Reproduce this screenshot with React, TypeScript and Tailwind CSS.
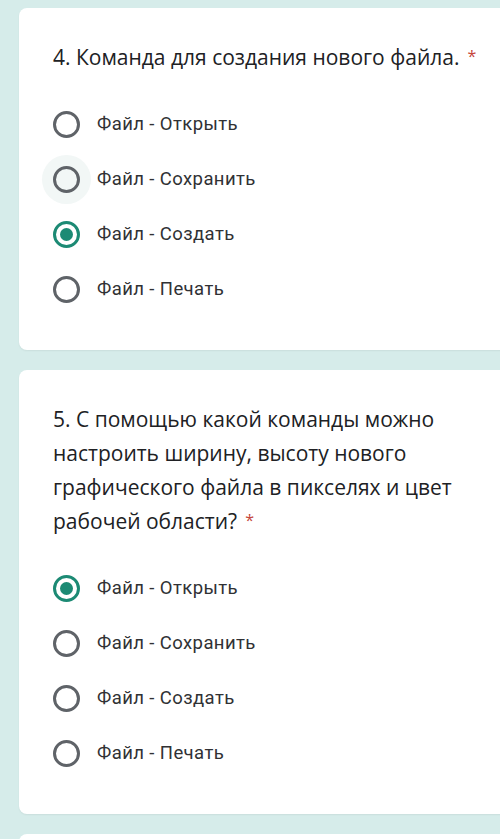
const questions = [
  {
    title: "4. Команда для создания нового файла.",
    options: ["Файл - Открыть", "Файл - Сохранить", "Файл - Создать", "Файл - Печать"],
    checked: 2,
    hover: 1,
  },
  {
    title:
      "5. С помощью какой команды можно настроить ширину, высоту нового графического файла в пикселях и цвет рабочей области?",
    options: ["Файл - Открыть", "Файл - Сохранить", "Файл - Создать", "Файл - Печать"],
    checked: 0,
    hover: -1,
  },
];

function Radio({ checked, hover }: { checked: boolean; hover: boolean }) {
  return (
    <div className="relative flex h-[27px] w-[27px] shrink-0 items-center justify-center">
      {hover && <div className="absolute -inset-[11px] rounded-full bg-[#f2f7f6]" />}
      <div
        className={
          checked
            ? "relative flex h-[27px] w-[27px] items-center justify-center rounded-full border-[3px] border-[#1c8a74]"
            : "relative h-[27px] w-[27px] rounded-full border-[3px] border-[#5f6368]"
        }
      >
        {checked && <div className="h-[13px] w-[13px] rounded-full bg-[#1c8a74]" />}
      </div>
    </div>
  );
}

export default function App() {
  return (
    <div className="min-h-[839px] w-[500px] overflow-hidden bg-[#d6ecea] pt-2">
      <div className="flex flex-col gap-5 pl-[19px]">
        {questions.map((q, qi) => (
          <div key={qi} className="w-[520px] rounded-lg bg-white pb-[33px] pl-[34px] pr-[60px] pt-[32px] shadow-[0_1px_2px_rgba(0,0,0,0.06)]">
            <div className="text-[21px] leading-[34px] text-[#202124] [font-family:'Open_Sans',sans-serif]">
              {q.title}
              <span className="relative -top-[3px] ml-2 text-[16px] leading-none text-[#c5453a]">*</span>
            </div>
            <div className="mt-[23px] flex flex-col">
              {q.options.map((opt, oi) => (
                <div key={oi} className="flex h-[55px] items-center gap-[17px]">
                  <Radio checked={oi === q.checked} hover={oi === q.hover} />
                  <span className="text-[18.5px] tracking-[0.4px] text-[#303134] [font-family:Roboto,sans-serif]">{opt}</span>
                </div>
              ))}
            </div>
          </div>
        ))}
        <div className="h-[60px] w-[520px] rounded-lg bg-white" />
      </div>
    </div>
  );
}
